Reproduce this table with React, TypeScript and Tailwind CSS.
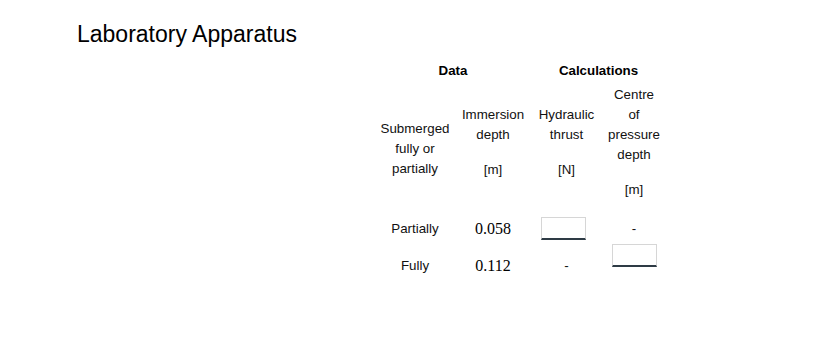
// Hydrostatic thrust worksheet: measured data on the left, blanks to fill on the right.

const cell = 'flex items-center justify-center text-center'

function AnswerBox({ className = '' }: { className?: string }) {
  return (
    <input
      type="text"
      aria-label="answer"
      className={`h-[23px] w-[45px] border border-[#d6d6d6] border-b-[2px] border-b-[#2e3b45] bg-white outline-none ${className}`}
    />
  )
}

function Num({ children }: { children: string }) {
  return <span className="font-['Liberation_Serif',serif] text-[16px] text-black">{children}</span>
}

export default function App() {
  return (
    <div className="min-h-[364px] w-[834px] bg-white pt-[20px] font-['Liberation_Sans',Arial,sans-serif] text-[#111]">
      <h1 className="pl-[77px] text-[23px] leading-[28px] text-black">Laboratory Apparatus</h1>

      <div className="mt-[13px] ml-[375px] grid w-[291px] grid-cols-[80px_76px_71px_64px] text-[13.33px] leading-[20px]">
        {/* group headings */}
        <div className="col-span-2 text-center font-bold text-black">Data</div>
        <div className="col-span-2 text-center font-bold text-black">Calculations</div>

        {/* column labels */}
        <div className={`${cell} mt-[3px] h-[116px]`}>
          <div className="pt-[13px]">
            Submerged
            <br />
            fully or
            <br />
            partially
          </div>
        </div>
        <div className={`${cell} mt-[3px] h-[116px]`}>
          <div>
            Immersion
            <br />
            depth
            <div className="mt-[15px]">[m]</div>
          </div>
        </div>
        <div className={`${cell} mt-[3px] h-[116px]`}>
          <div>
            Hydraulic
            <br />
            thrust
            <div className="mt-[15px]">[N]</div>
          </div>
        </div>
        <div className={`${cell} mt-[3px] h-[116px]`}>
          <div>
            Centre
            <br />
            of
            <br />
            pressure
            <br />
            depth
            <div className="mt-[15px]">[m]</div>
          </div>
        </div>

        {/* partially submerged */}
        <div className={`${cell} mt-[10px] h-[37px]`}>Partially</div>
        <div className={`${cell} mt-[10px] h-[37px]`}>
          <Num>0.058</Num>
        </div>
        <div className={`${cell} mt-[10px] h-[37px]`}>
          <AnswerBox className="mr-[7px]" />
        </div>
        <div className={`${cell} mt-[10px] h-[37px]`}>-</div>

        {/* fully submerged */}
        <div className={`${cell} h-[37px]`}>Fully</div>
        <div className={`${cell} h-[37px]`}>
          <Num>0.112</Num>
        </div>
        <div className={`${cell} h-[37px]`}>-</div>
        <div className={`${cell} h-[37px]`}>
          <AnswerBox className="mb-[21px]" />
        </div>
      </div>
    </div>
  )
}
